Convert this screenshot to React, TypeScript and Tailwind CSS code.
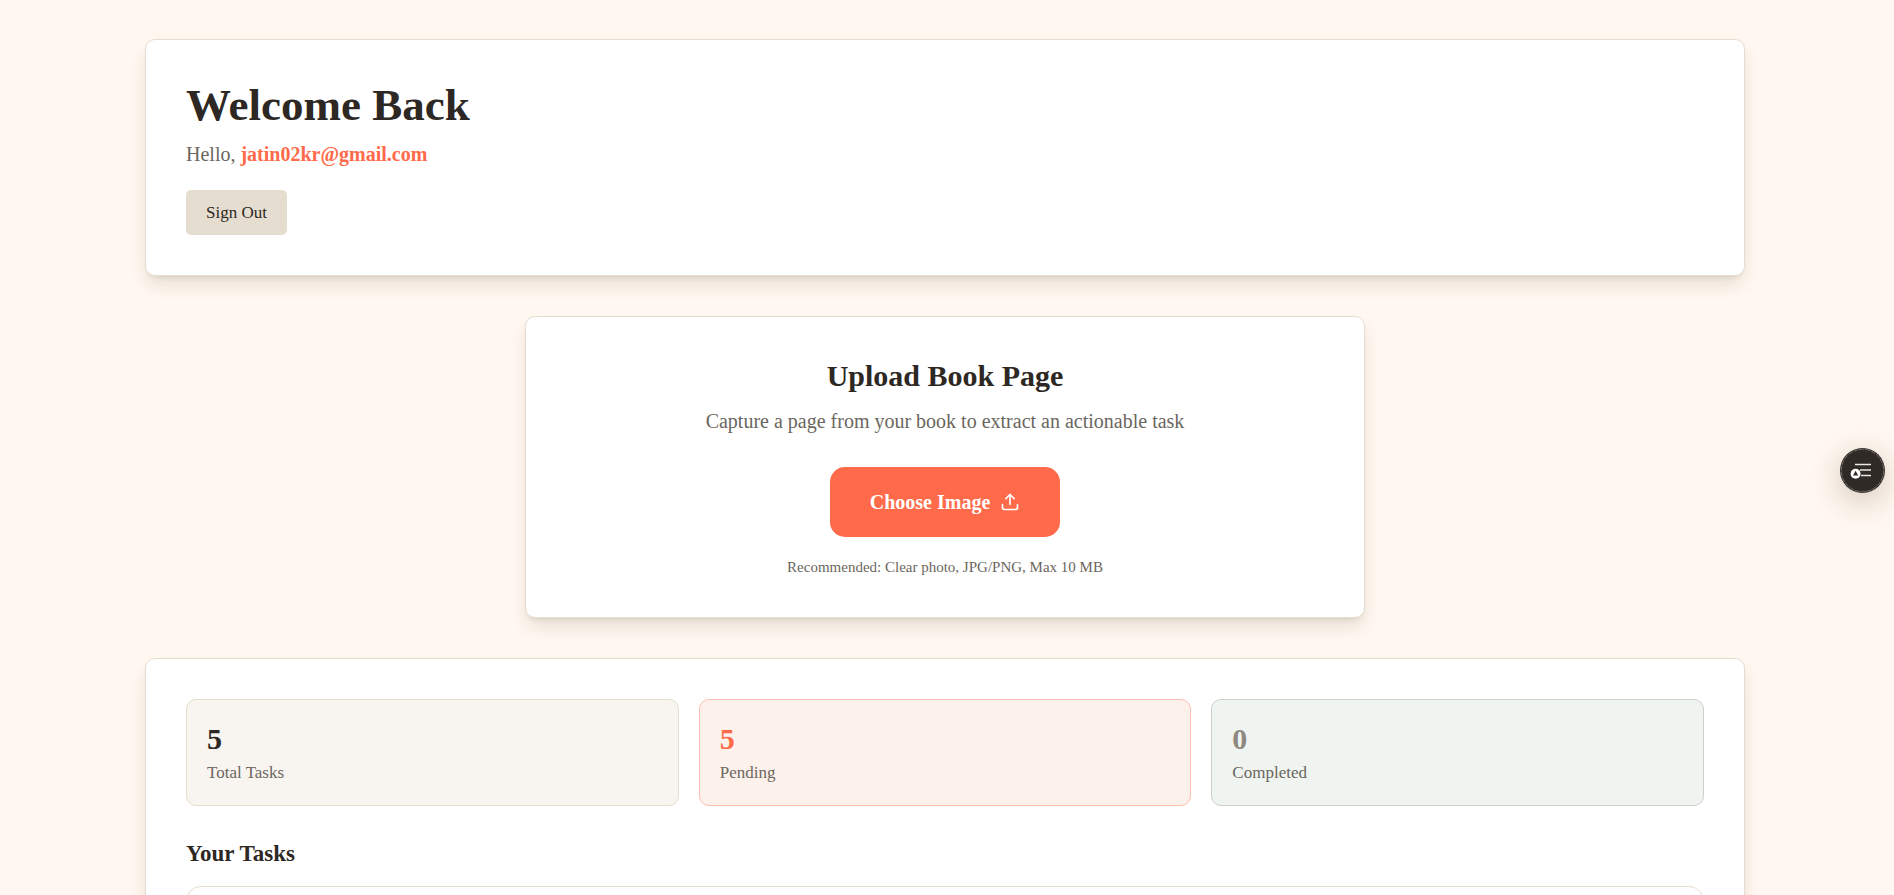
import { useRef, useState } from 'react';
import { Upload } from 'lucide-react';

interface StatCardProps {
  value: number;
  label: string;
  cardClass: string;
  valueClass: string;
}

const STATS: StatCardProps[] = [
  { value: 5, label: 'Total Tasks', cardClass: 'bg-[#f8f4ef] border-[#e6ddd1]', valueClass: 'text-[#2d2823]' },
  { value: 5, label: 'Pending', cardClass: 'bg-[#fdf1eb] border-[#ffc0b1]', valueClass: 'text-[#ff6b4a]' },
  { value: 0, label: 'Completed', cardClass: 'bg-[#eff4f0] border-[#cdd0ca]', valueClass: 'text-[#8e8880]' },
];

const CARD =
  'bg-white border border-[#e6ddd1] rounded-[10px] p-10 shadow-[0_10px_18px_-3px_rgba(80,60,30,0.14),0_4px_6px_-4px_rgba(80,60,30,0.16)]';

function StatCard({ value, label, cardClass, valueClass }: StatCardProps) {
  return (
    <div className={`flex-1 border rounded-[10px] p-5 ${cardClass}`}>
      <p className={`text-[30px] leading-[38px] font-bold mb-0.5 ${valueClass}`}>{value}</p>
      <p className="text-[17px] leading-[25px] text-[#6b665e]">{label}</p>
    </div>
  );
}

function UploadCard() {
  const inputRef = useRef<HTMLInputElement>(null);

  return (
    <section className={`${CARD} w-full max-w-[840px] mx-auto flex flex-col items-center text-center`}>
      <h2 className="text-[30px] leading-[38px] font-bold mb-3">Upload Book Page</h2>
      <p className="text-[20px] leading-7 text-[#6b665e] mb-8">
        Capture a page from your book to extract an actionable task
      </p>
      <button
        type="button"
        onClick={() => inputRef.current?.click()}
        className="flex items-center gap-2.5 h-[70px] px-10 rounded-[15px] bg-[#ff6b4a] text-white text-[20px] leading-7 font-bold cursor-pointer"
      >
        Choose Image
        <Upload className="w-5 h-5" />
      </button>
      <input ref={inputRef} type="file" accept="image/jpeg,image/png" aria-label="Choose Image" className="hidden" />
      <p className="text-[15px] leading-5 text-[#6b665e] mt-5">Recommended: Clear photo, JPG/PNG, Max 10 MB</p>
    </section>
  );
}

function FloatingButton() {
  const [open, setOpen] = useState(false);

  return (
    <button
      type="button"
      aria-label="Open panel"
      aria-expanded={open}
      onClick={() => setOpen(!open)}
      className="fixed right-[9px] top-[448px] w-[45px] h-[45px] rounded-full bg-[#2f2a26] shadow-[0_8px_30px_rgba(80,60,30,0.25)] cursor-pointer"
    >
      <svg viewBox="0 0 45 45" fill="none" aria-hidden="true">
        <circle cx="22.5" cy="22.5" r="21.2" stroke="#7d7771" strokeWidth="0.9" strokeDasharray="5 1" />
        <path d="M15 16.5h16M20 22h11M21 27.5h10" stroke="#e9e7e4" strokeWidth="1.5" />
        <circle cx="15.6" cy="25.8" r="5" fill="#fff" />
        <path d="M15.6 22.8l2.6 4.6h-5.2z" fill="#2f2a26" />
      </svg>
    </button>
  );
}

export default function App() {
  return (
    <div className="h-screen overflow-hidden bg-[#fff7f0] text-[#2d2823] font-['Liberation_Serif',serif]">
      <main className="pt-[39px] pl-10 pr-11">
        <div className="max-w-[1600px] mx-auto flex flex-col gap-10">
          <header className={CARD}>
            <h1 className="text-[45px] leading-[50px] font-bold mb-2.5">Welcome Back</h1>
            <p className="text-[20px] leading-7 text-[#6b665e] mb-[22px]">
              Hello, <span className="font-bold text-[#ff6b4a]">jatin02kr@gmail.com</span>
            </p>
            <button type="button" className="block px-5 py-2.5 rounded-[5px] bg-[#e6ddd1] text-[17px] leading-[25px] cursor-pointer">
              Sign Out
            </button>
          </header>

          <UploadCard />

          <section className={CARD}>
            <div className="flex gap-5">
              {STATS.map((stat) => (
                <StatCard key={stat.label} {...stat} />
              ))}
            </div>
            <h2 className="text-[23px] leading-[35px] font-bold mt-[30px] mb-[15px]">Your Tasks</h2>
            <div className="h-40 border border-[#e6ddd1] rounded-[15px]" />
          </section>
        </div>
      </main>
      <FloatingButton />
    </div>
  );
}
